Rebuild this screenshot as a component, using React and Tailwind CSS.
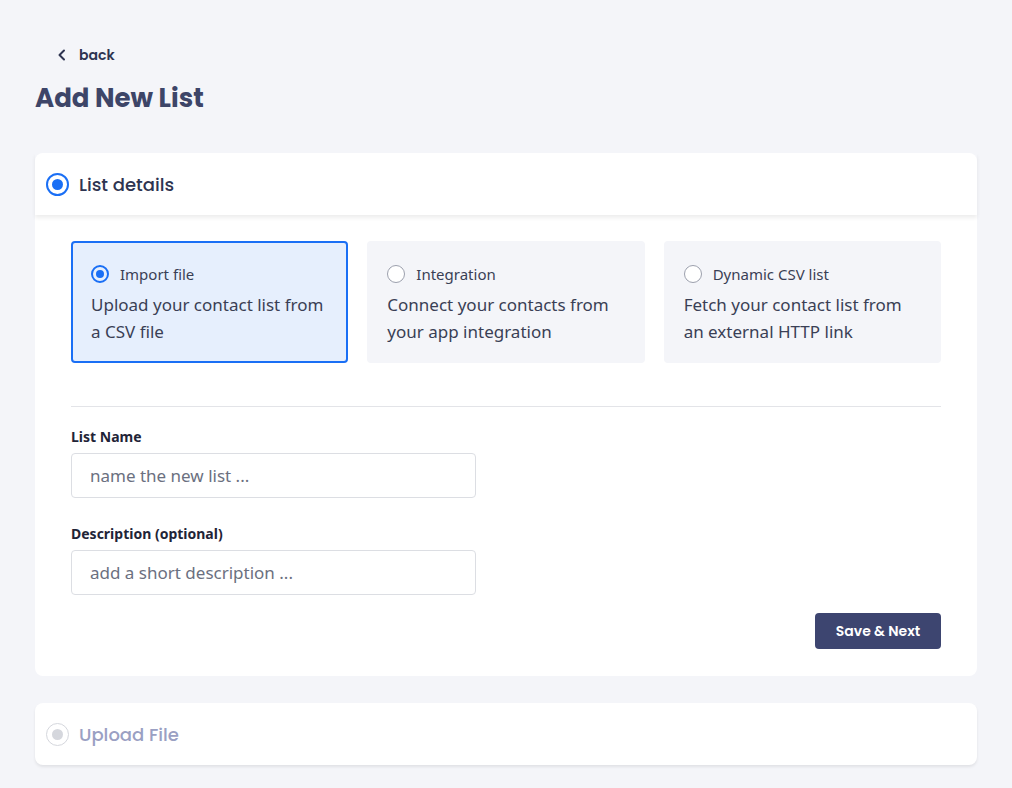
export default function App() {
  const opts = [
    ["Import file", "Upload your contact list from a CSV file", true],
    ["Integration", "Connect your contacts from your app integration", false],
    ["Dynamic CSV list", "Fetch your contact list from an external HTTP link", false],
  ];
  const head = { fontFamily: "Poppins, 'Noto Sans', 'Open Sans', sans-serif" };
  return (
    <div className="min-h-[788px] bg-[#f4f5f9] px-[35px] pt-[44px] pb-[34px]" style={{ fontFamily: "'Source Sans Pro', 'Noto Sans', 'Open Sans', sans-serif" }}>
      <div className="flex items-center gap-[12px] pl-[22px] text-[#2e3451] text-[14px] font-semibold h-[22px]" style={head}>
        <svg width="10" height="12" viewBox="0 0 10 12"><path d="M7 1.5 L2.5 6 L7 10.5" fill="none" stroke="#2e3451" strokeWidth="2" strokeLinecap="round" strokeLinejoin="round"/></svg>
        back
      </div>
      <h1 className="text-[26px] font-bold text-[#3d4568] mt-[14px] leading-[36px]" style={head}>Add New List</h1>
      <div className="mt-[37px] bg-white rounded-[8px]">
        <div className="h-[62px] flex items-center gap-[10px] pl-[11px] shadow-[0_3px_4px_rgba(0,0,0,0.07)]">
          <span className="w-[23px] h-[23px] rounded-full border-2 border-[#1a6ff5] flex items-center justify-center"><span className="w-[11px] h-[11px] rounded-full bg-[#1a6ff5]" /></span>
          <span className="text-[18px] font-medium text-[#2e3451]" style={head}>List details</span>
        </div>
        <div className="px-[36px] pt-[26px] pb-[27px]">
          <div className="grid grid-cols-3 gap-[19px]">
            {opts.map(([t, d, a]) => (
              <div key={t} className={`h-[122px] rounded-[4px] px-[18px] pt-[20px] ${a ? "border-2 border-[#1a6ff5] bg-[#e6effd]" : "bg-[#f4f5f9] border-2 border-transparent"}`}>
                <div className="flex items-center gap-[11px] text-[15px] text-[#3a3f55] leading-[22px]">
                  {a ? (
                    <span className="w-[18px] h-[18px] rounded-full border-2 border-[#1a6ff5] flex items-center justify-center"><span className="w-[8px] h-[8px] rounded-full bg-[#1a6ff5]" /></span>
                  ) : (
                    <span className="w-[18px] h-[18px] rounded-full border border-[#9ca0ad] bg-white" />
                  )}
                  {t}
                </div>
                <p className="mt-[6px] text-[17px] leading-[27px] text-[#3a3f55]">{d}</p>
              </div>
            ))}
          </div>
          <div className="h-px bg-[#e3e4e8] mt-[43px]" />
          <div className="mt-[21px] text-[14px] font-bold text-[#1f2437] leading-[18px]">List Name</div>
          <div className="mt-[7px] w-[405px] h-[45px] border border-[#dcdee3] rounded-[4px] flex items-center px-[18px] text-[17px] text-[#6b7080]">name the new list ...</div>
          <div className="mt-[27px] text-[14px] font-bold text-[#1f2437] leading-[18px]">Description (optional)</div>
          <div className="mt-[7px] w-[405px] h-[45px] border border-[#dcdee3] rounded-[4px] flex items-center px-[18px] text-[17px] text-[#6b7080]">add a short description ...</div>
          <div className="flex justify-end mt-[18px]">
            <button className="w-[126px] h-[36px] rounded-[4px] bg-[#3d4570] text-white text-[14px] font-semibold" style={head}>Save &amp; Next</button>
          </div>
        </div>
      </div>
      <div className="mt-[27px] bg-white rounded-[8px] h-[62px] flex items-center gap-[10px] pl-[11px] shadow-[0_2px_3px_rgba(0,0,0,0.08)]">
        <span className="w-[23px] h-[23px] rounded-full border border-[#d5d7dd] flex items-center justify-center"><span className="w-[11px] h-[11px] rounded-full bg-[#d5d7dd]" /></span>
        <span className="text-[18px] font-medium text-[#9aa0c3]" style={head}>Upload File</span>
      </div>
    </div>
  );
}
